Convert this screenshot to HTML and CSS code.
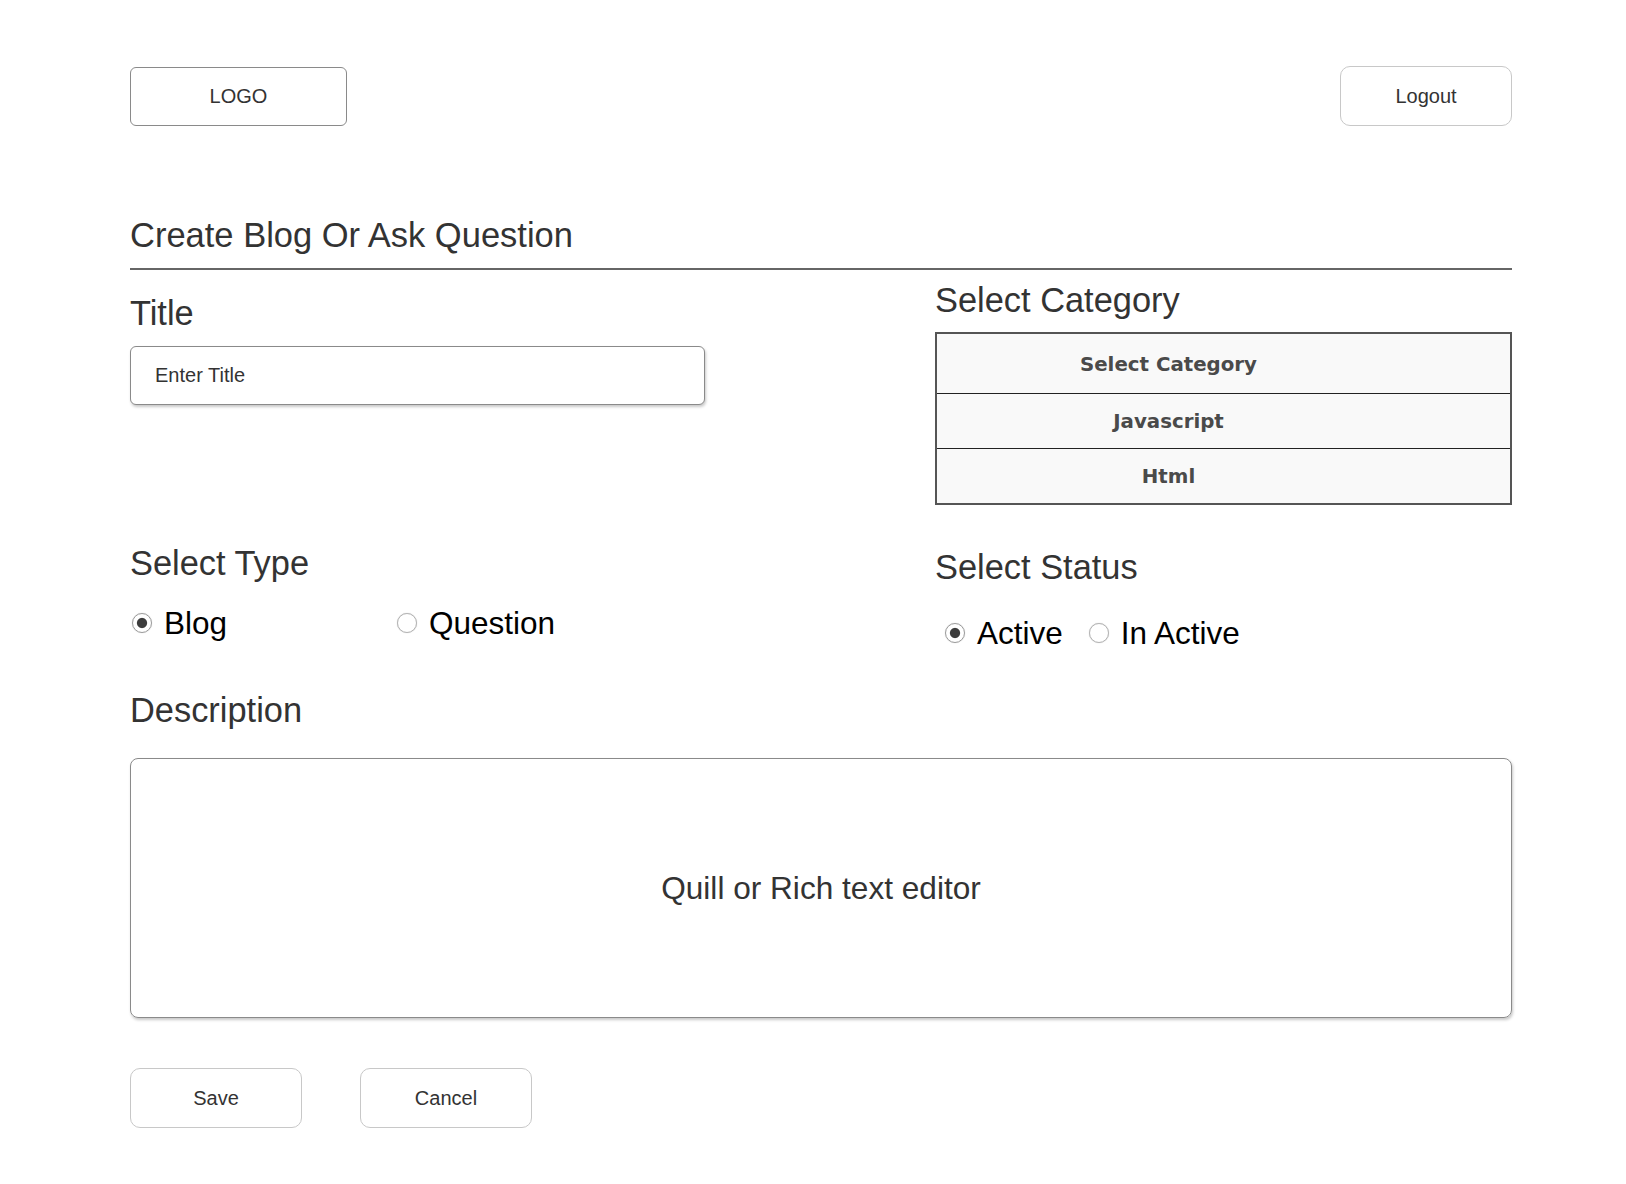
FILE: index.html
```html
<!DOCTYPE html>
<html lang="en">
<head>
<meta charset="utf-8">
<title>Create Blog Or Ask Question</title>
<link rel="stylesheet" href="styles.css">
</head>
<body>
<div class="page">
  <header class="topbar">
    <div class="logo">LOGO</div>
    <button class="btn btn-logout" type="button">Logout</button>
  </header>

  <h1 class="page-title">Create Blog Or Ask Question</h1>

  <div class="row row-first">
    <div class="col-left">
      <h2 class="label label-title">Title</h2>
      <input class="title-input" type="text" placeholder="Enter Title">
    </div>
    <div class="col-right">
      <h2 class="label label-category">Select Category</h2>
      <ul class="category-list">
        <li class="category-item category-item-first">Select Category</li>
        <li class="category-item">Javascript</li>
        <li class="category-item">Html</li>
      </ul>
    </div>
  </div>

  <div class="row row-second">
    <div class="col-left">
      <h2 class="label label-type">Select Type</h2>
      <div class="radio-group radio-group-type">
        <label class="radio-option radio-option-wide"><input type="radio" name="type" checked><span>Blog</span></label>
        <label class="radio-option"><input type="radio" name="type"><span>Question</span></label>
      </div>
    </div>
    <div class="col-right">
      <h2 class="label label-status">Select Status</h2>
      <div class="radio-group radio-group-status">
        <label class="radio-option"><input type="radio" name="status" checked><span>Active</span></label>
        <label class="radio-option"><input type="radio" name="status"><span>In Active</span></label>
      </div>
    </div>
  </div>

  <h2 class="label label-desc">Description</h2>
  <div class="editor">Quill or Rich text editor</div>

  <div class="actions">
    <button class="btn btn-action" type="button">Save</button>
    <button class="btn btn-action" type="button">Cancel</button>
  </div>
</div>
</body>
</html>
```

FILE: styles.css
```css
html, body {
  margin: 0;
  padding: 0;
  background: #ffffff;
}

body {
  font-family: "Liberation Sans", Arial, Helvetica, sans-serif;
  color: #333333;
}

.page {
  width: 1382px;
  margin-left: 130px;
  padding-top: 66px;
  padding-bottom: 40px;
}

.topbar {
  display: flex;
  justify-content: space-between;
  align-items: flex-start;
}

.logo {
  box-sizing: border-box;
  width: 217px;
  height: 59px;
  margin-top: 1px;
  border: 1px solid #8a8a8a;
  border-radius: 6px;
  display: flex;
  align-items: center;
  justify-content: center;
  font-size: 20px;
  color: #333;
}

.btn {
  box-sizing: border-box;
  background: #fff;
  border: 1px solid #c8c8c8;
  border-radius: 10px;
  font-family: "Liberation Sans", Arial, Helvetica, sans-serif;
  font-size: 20px;
  color: #333;
  padding: 0;
  cursor: pointer;
}

.btn-logout {
  width: 172px;
  height: 60px;
}

.page-title {
  margin: 89px 0 0 0;
  font-size: 34.5px;
  line-height: 40px;
  font-weight: normal;
  color: #333;
  padding-bottom: 13px;
  border-bottom: 2px solid #666;
}

.row {
  display: flex;
}

.col-left {
  width: 805px;
  flex: none;
}

.col-right {
  width: 577px;
  flex: none;
}

.label {
  margin: 0;
  font-size: 34.4px;
  line-height: 40px;
  font-weight: normal;
  color: #333;
}

.label-title { margin-top: 23px; }
.label-category { margin-top: 10px; }

.title-input {
  display: block;
  box-sizing: border-box;
  margin-top: 13px;
  width: 575px;
  height: 59px;
  border: 1px solid #8a8a8a;
  border-radius: 6px;
  box-shadow: 1px 2px 3px rgba(0, 0, 0, 0.22);
  padding: 0 0 0 24px;
  font-family: "Liberation Sans", Arial, Helvetica, sans-serif;
  font-size: 20px;
  color: #333;
  outline: none;
}

.title-input::placeholder {
  color: #333;
  opacity: 1;
}

.category-list {
  list-style: none;
  margin: 12px 0 0 0;
  padding: 0;
  border: 2px solid #555;
  background: #f9f9f9;
}

.category-item {
  height: 54px;
  display: flex;
  align-items: center;
  justify-content: center;
  padding-right: 110px;
  font-family: "DejaVu Sans", Verdana, sans-serif;
  font-weight: bold;
  font-size: 19.8px;
  color: #4a4a4a;
  border-top: 1px solid #222;
}

.category-item-first {
  height: 59px;
  padding-top: 1px;
  box-sizing: border-box;
  border-top: none;
}

.label-type { margin-top: 38px; }
.label-status { margin-top: 42px; }

.radio-group {
  display: flex;
  align-items: center;
}

.radio-group-type {
  margin-top: 22px;
  padding-left: 2px;
}

.radio-group-status {
  margin-top: 28px;
  padding-left: 10px;
  gap: 26px;
}

.radio-option {
  display: flex;
  align-items: center;
  gap: 12px;
  font-size: 31.5px;
  line-height: 36px;
  color: #000;
}

.radio-option-wide {
  width: 265px;
}

.radio-option input {
  -webkit-appearance: none;
  appearance: none;
  box-sizing: border-box;
  margin: 0;
  width: 20px;
  height: 20px;
  border-radius: 50%;
  border: 1px solid #b4b4b4;
  background: #fff;
  box-shadow: 0 0 1px rgba(0, 0, 0, 0.25);
  flex: none;
}

.radio-option input:checked {
  border-color: #9a9a9a;
  background: radial-gradient(circle, #3c3c3c 0, #3c3c3c 4.6px, #fff 5.6px);
}

.label-desc { margin-top: 39px; }

.editor {
  box-sizing: border-box;
  margin-top: 28px;
  height: 260px;
  border: 1px solid #8a8a8a;
  border-radius: 8px;
  box-shadow: 1px 2px 3px rgba(0, 0, 0, 0.22);
  display: flex;
  align-items: center;
  justify-content: center;
  font-size: 31.6px;
  color: #333;
}

.actions {
  display: flex;
  gap: 58px;
  margin-top: 50px;
}

.btn-action {
  width: 172px;
  height: 60px;
}
```
